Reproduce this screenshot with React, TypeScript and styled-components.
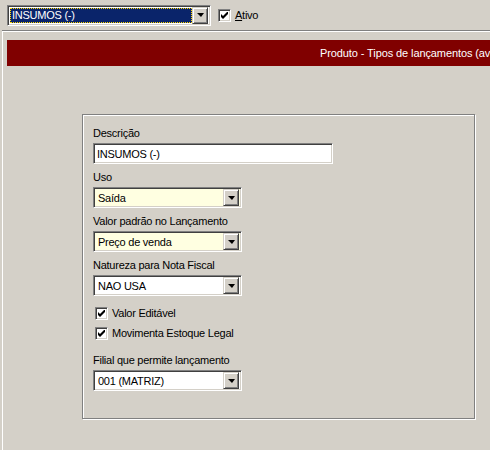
import React from "react";
import styled, { createGlobalStyle, css } from "styled-components";

const GlobalStyle = createGlobalStyle`
  html, body {
    margin: 0;
    padding: 0;
    background: #d4d0c8;
  }
  body {
    font-family: "Liberation Sans", Arial, sans-serif;
    font-size: 11px;
    letter-spacing: -0.25px;
    color: #000;
  }
`;

const sunken = css`
  border: 1px solid;
  border-color: #808080 #ffffff #ffffff #808080;
  box-shadow: inset 1px 1px #404040, inset -1px -1px #d4d0c8;
`;

const TScreen = styled("div")`
  width: 490px;
  height: 450px;
  overflow: hidden;
  display: flex;
  flex-direction: column;
`;

const TTopBar = styled("div")`
  height: 30px;
  display: flex;
  align-items: center;
  padding-left: 7px;
  box-sizing: border-box;
`;

const TCombo = styled("div")<{ $width: number; $bg?: string }>`
  ${sunken};
  box-sizing: border-box;
  width: ${(p) => p.$width}px;
  height: 21px;
  display: flex;
  align-items: center;
  padding: 2px;
  background: ${(p) => p.$bg || "#ffffff"};
`;

const TComboText = styled("div")<{ $selected?: boolean }>`
  flex: 1;
  height: 100%;
  display: flex;
  align-items: center;
  padding-left: 2px;
  box-sizing: border-box;
  white-space: nowrap;
  ${(p) =>
    p.$selected &&
    css`
      background: #0a246a;
      color: #ffffff;
      outline: 1px dotted #ffd700;
      outline-offset: -1px;
    `}
`;

const TDropButton = styled("div")`
  width: 16px;
  height: 17px;
  box-sizing: border-box;
  background: #d4d0c8;
  border: 1px solid;
  border-color: #d4d0c8 #404040 #404040 #d4d0c8;
  box-shadow: inset 1px 1px #ffffff, inset -1px -1px #808080;
  display: flex;
  align-items: center;
  justify-content: center;

  &::after {
    content: "";
    width: 0;
    height: 0;
    border-left: 4px solid transparent;
    border-right: 3px solid transparent;
    border-top: 4px solid #000;
    margin-left: 1px;
  }
`;

const TCheckRow = styled("label")<{ $offset?: number }>`
  display: flex;
  align-items: center;
  gap: 4px;
  height: 20px;
  padding-left: 2px;
  margin-left: ${(p) => p.$offset || 0}px;
`;

const TCheckBox = styled("span")`
  ${sunken};
  box-sizing: border-box;
  width: 13px;
  height: 13px;
  background: #ffffff;
  display: flex;
  align-items: center;
  justify-content: center;
`;

const TUnderline = styled("span")`
  text-decoration: underline;
`;

const TPanel = styled("div")`
  flex: 1;
  margin-left: 2px;
  border-top: 1px solid #808080;
  box-shadow: inset 1px 1px #ffffff;
  padding: 9px 0 0 5px;
  display: flex;
  flex-direction: column;
`;

const TTitle = styled("div")`
  height: 26px;
  background: #800000;
  color: #ffffff;
  font-size: 11px;
  letter-spacing: -0.1px;
  display: flex;
  align-items: center;
  padding-left: 313px;
  white-space: nowrap;
  overflow: hidden;
`;

const TGroup = styled("div")`
  margin: 48px 0 0 75px;
  width: 393px;
  height: 305px;
  box-sizing: border-box;
  border: 1px solid #808080;
  box-shadow: inset 1px 1px #ffffff, 1px 1px #ffffff;
  padding: 12px 0 0 10px;
  display: flex;
  flex-direction: column;
`;

const TField = styled("div")`
  display: flex;
  flex-direction: column;
  gap: 3px;
  margin-bottom: 7px;
`;

const TLabel = styled("div")`
  height: 13px;
  line-height: 13px;
  white-space: nowrap;
`;

const TTextInput = styled("div")`
  ${sunken};
  box-sizing: border-box;
  width: 240px;
  height: 21px;
  background: #ffffff;
  padding-left: 3px;
  display: flex;
  align-items: center;
`;

const TChecks = styled("div")`
  display: flex;
  flex-direction: column;
  margin-bottom: 11px;
`;

const CheckMark = () => (
  <svg width="7" height="7" viewBox="0 0 7 7">
    <path d="M0 2 L2 4 L7 -1 L7 2 L2 7 L0 5 Z" fill="#000" />
  </svg>
);

const Select = ({ value, bg }: { value: string; bg?: string }) => (
  <TCombo $width={149} $bg={bg}>
    <TComboText>{value}</TComboText>
    <TDropButton />
  </TCombo>
);

const Check = ({ label, offset }: { label: React.ReactNode; offset?: number }) => (
  <TCheckRow $offset={offset}>
    <TCheckBox>
      <CheckMark />
    </TCheckBox>
    <span>{label}</span>
  </TCheckRow>
);

export default function App() {
  return (
    <TScreen>
      <GlobalStyle />
      <TTopBar>
        <TCombo $width={204}>
          <TComboText $selected>INSUMOS (-)</TComboText>
          <TDropButton />
        </TCombo>
        <Check
          offset={5}
          label={
            <>
              <TUnderline>A</TUnderline>tivo
            </>
          }
        />
      </TTopBar>
      <TPanel>
        <TTitle>Produto - Tipos de lançamentos (avançado)</TTitle>
        <TGroup>
          <TField>
            <TLabel>Descrição</TLabel>
            <TTextInput>INSUMOS (-)</TTextInput>
          </TField>
          <TField>
            <TLabel>Uso</TLabel>
            <Select value="Saída" bg="#ffffe1" />
          </TField>
          <TField>
            <TLabel>Valor padrão no Lançamento</TLabel>
            <Select value="Preço de venda" bg="#ffffe1" />
          </TField>
          <TField>
            <TLabel>Natureza para Nota Fiscal</TLabel>
            <Select value="NAO USA" />
          </TField>
          <TChecks>
            <Check label="Valor Editável" />
            <Check label="Movimenta Estoque Legal" />
          </TChecks>
          <TField>
            <TLabel>Filial que permite lançamento</TLabel>
            <Select value="001 (MATRIZ)" />
          </TField>
        </TGroup>
      </TPanel>
    </TScreen>
  );
}
